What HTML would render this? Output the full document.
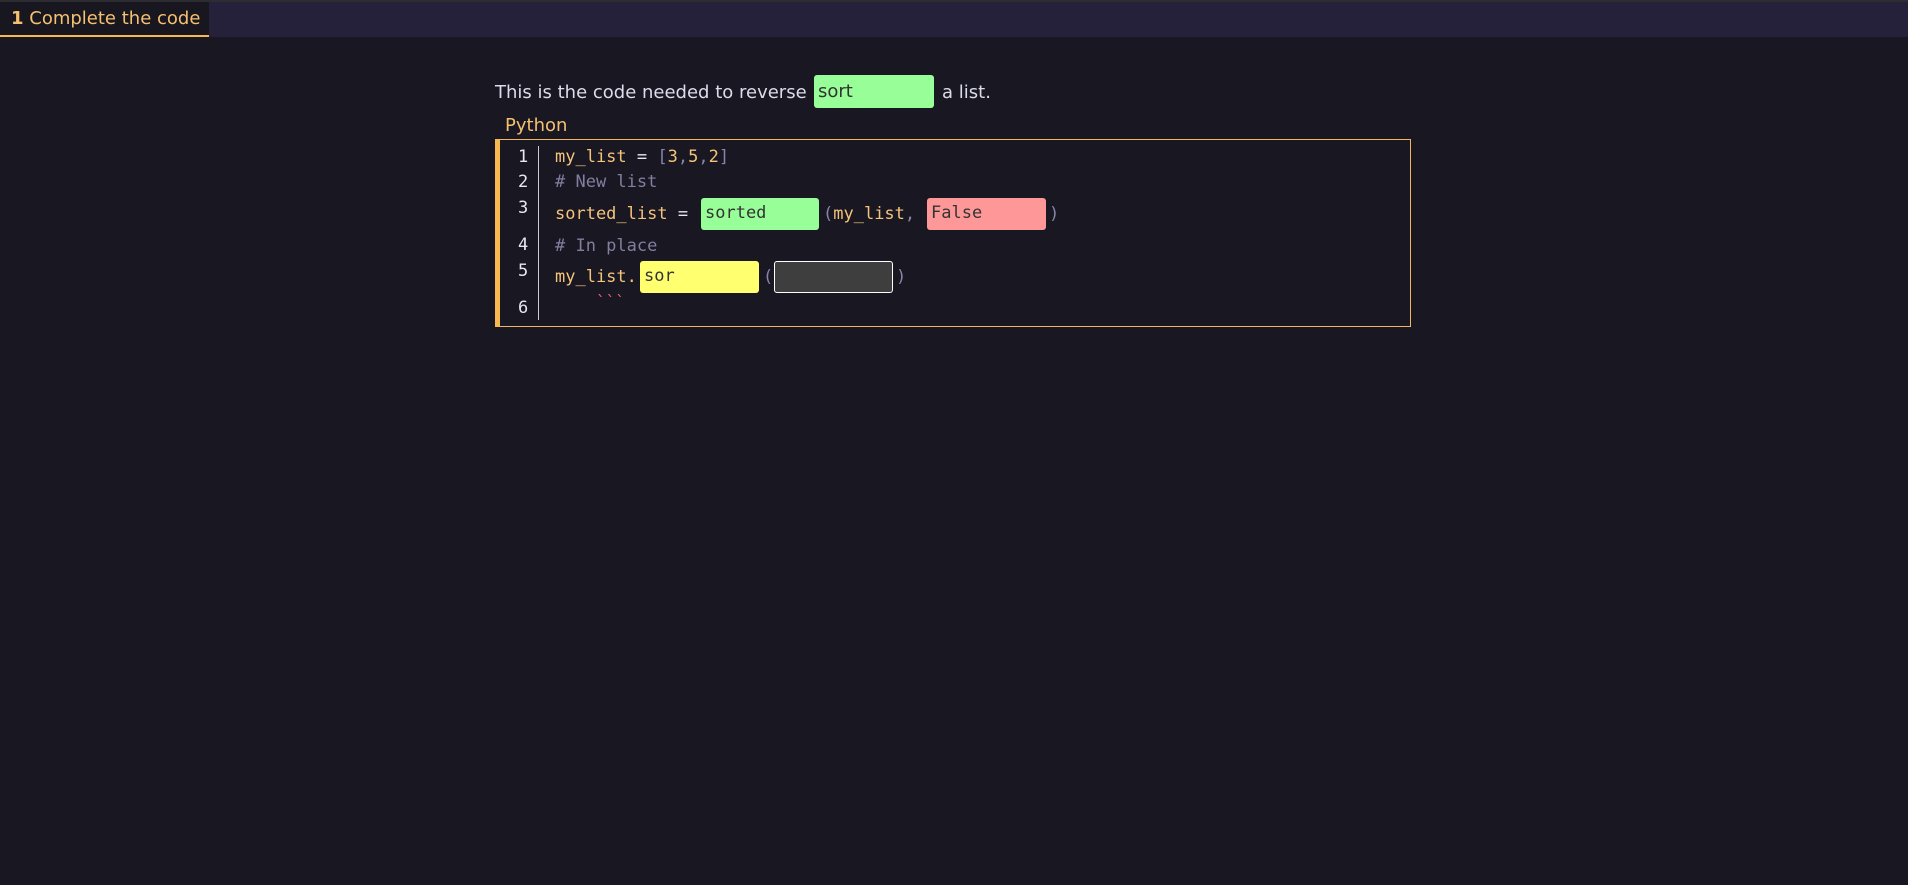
<!DOCTYPE html>
<html><head><meta charset="utf-8"><style>
*{margin:0;padding:0;box-sizing:border-box}
body{width:1908px;height:885px;background:#181722;overflow:hidden;font-family:"DejaVu Sans","Liberation Sans",sans-serif;position:relative}
.bar{position:absolute;left:0;top:0;width:1908px;height:37px;background:#25213a;border-top:2px solid #2e2c33}
.tab{position:absolute;left:0;top:2px;width:209px;height:35px;background:#18161f;border-bottom:2px solid #f5b94f;color:#f5c070;font-size:18px;padding:6px 0 0 11px;white-space:nowrap}
.a{position:absolute;white-space:pre}
.t{color:#dcdcea;font-size:18px}
.c{font-family:"DejaVu Sans Mono",monospace;font-size:17px;color:#f5c37a}
.n{font-family:"DejaVu Sans Mono",monospace;font-size:17px;color:#e8e8f0}
.cm{color:#827ea0}
.p{color:#8884a8}
.box{position:absolute;border-radius:3px;font-family:"DejaVu Sans Mono",monospace;font-size:17px;color:#333;padding:5px 4px;white-space:pre}
</style></head><body>
<div class="bar"></div>
<div class="tab"><b>1</b> Complete the code</div>
<div class="a t" style="left:495px;top:82px">This is the code needed to reverse</div>
<div class="box" style="left:814px;top:75px;width:120px;height:33px;background:#98fe98;font-family:'DejaVu Sans',sans-serif;font-size:18px;padding:6px 4px">sort</div>
<div class="a t" style="left:942px;top:82px">a list.</div>
<div class="a" style="left:505px;top:115px;color:#f5c070;font-size:18px">Python</div>
<div class="a" style="left:495px;top:139px;width:916px;height:188px;border:1px solid #f0b860;border-left:5px solid #f5b94f"></div>
<div class="a" style="left:538px;top:146px;width:1px;height:174px;background:#ccc"></div>
<div class="a n" style="left:518px;top:147px">1</div>
<div class="a n" style="left:518px;top:172px">2</div>
<div class="a n" style="left:518px;top:198px">3</div>
<div class="a n" style="left:518px;top:235px">4</div>
<div class="a n" style="left:518px;top:261px">5</div>
<div class="a n" style="left:518px;top:298px">6</div>
<div class="a c" style="left:555px;top:147px">my_list <span style="color:#e8e8f0">=</span> <span class="p">[</span>3<span class="p">,</span>5<span class="p">,</span>2<span class="p">]</span></div>
<div class="a c cm" style="left:555px;top:172px"># New list</div>
<div class="a c" style="left:555px;top:204px">sorted_list <span style="color:#e8e8f0">=</span></div>
<div class="box" style="left:701px;top:198px;width:118px;height:32px;background:#98fe98">sorted</div>
<div class="a c" style="left:823px;top:204px"><span class="p">(</span>my_list<span class="p">,</span></div>
<div class="box" style="left:927px;top:198px;width:119px;height:32px;background:#fe9898">False</div>
<div class="a c p" style="left:1049px;top:204px">)</div>
<div class="a c cm" style="left:555px;top:236px"># In place</div>
<div class="a c" style="left:555px;top:267px">my_list.</div>
<div class="box" style="left:640px;top:261px;width:119px;height:32px;background:#ffff70">sor</div>
<div class="a c p" style="left:763px;top:267px">(</div>
<div class="box" style="left:774px;top:261px;width:119px;height:32px;background:#3e3e3e;border:1px solid #fff"></div>
<div class="a c p" style="left:896px;top:267px">)</div>
<div class="a" style="left:596px;top:292px;color:#e8607e;font-family:'DejaVu Sans Mono',monospace;font-size:16px;line-height:20px">&#96;&#96;&#96;</div>
</body></html>
